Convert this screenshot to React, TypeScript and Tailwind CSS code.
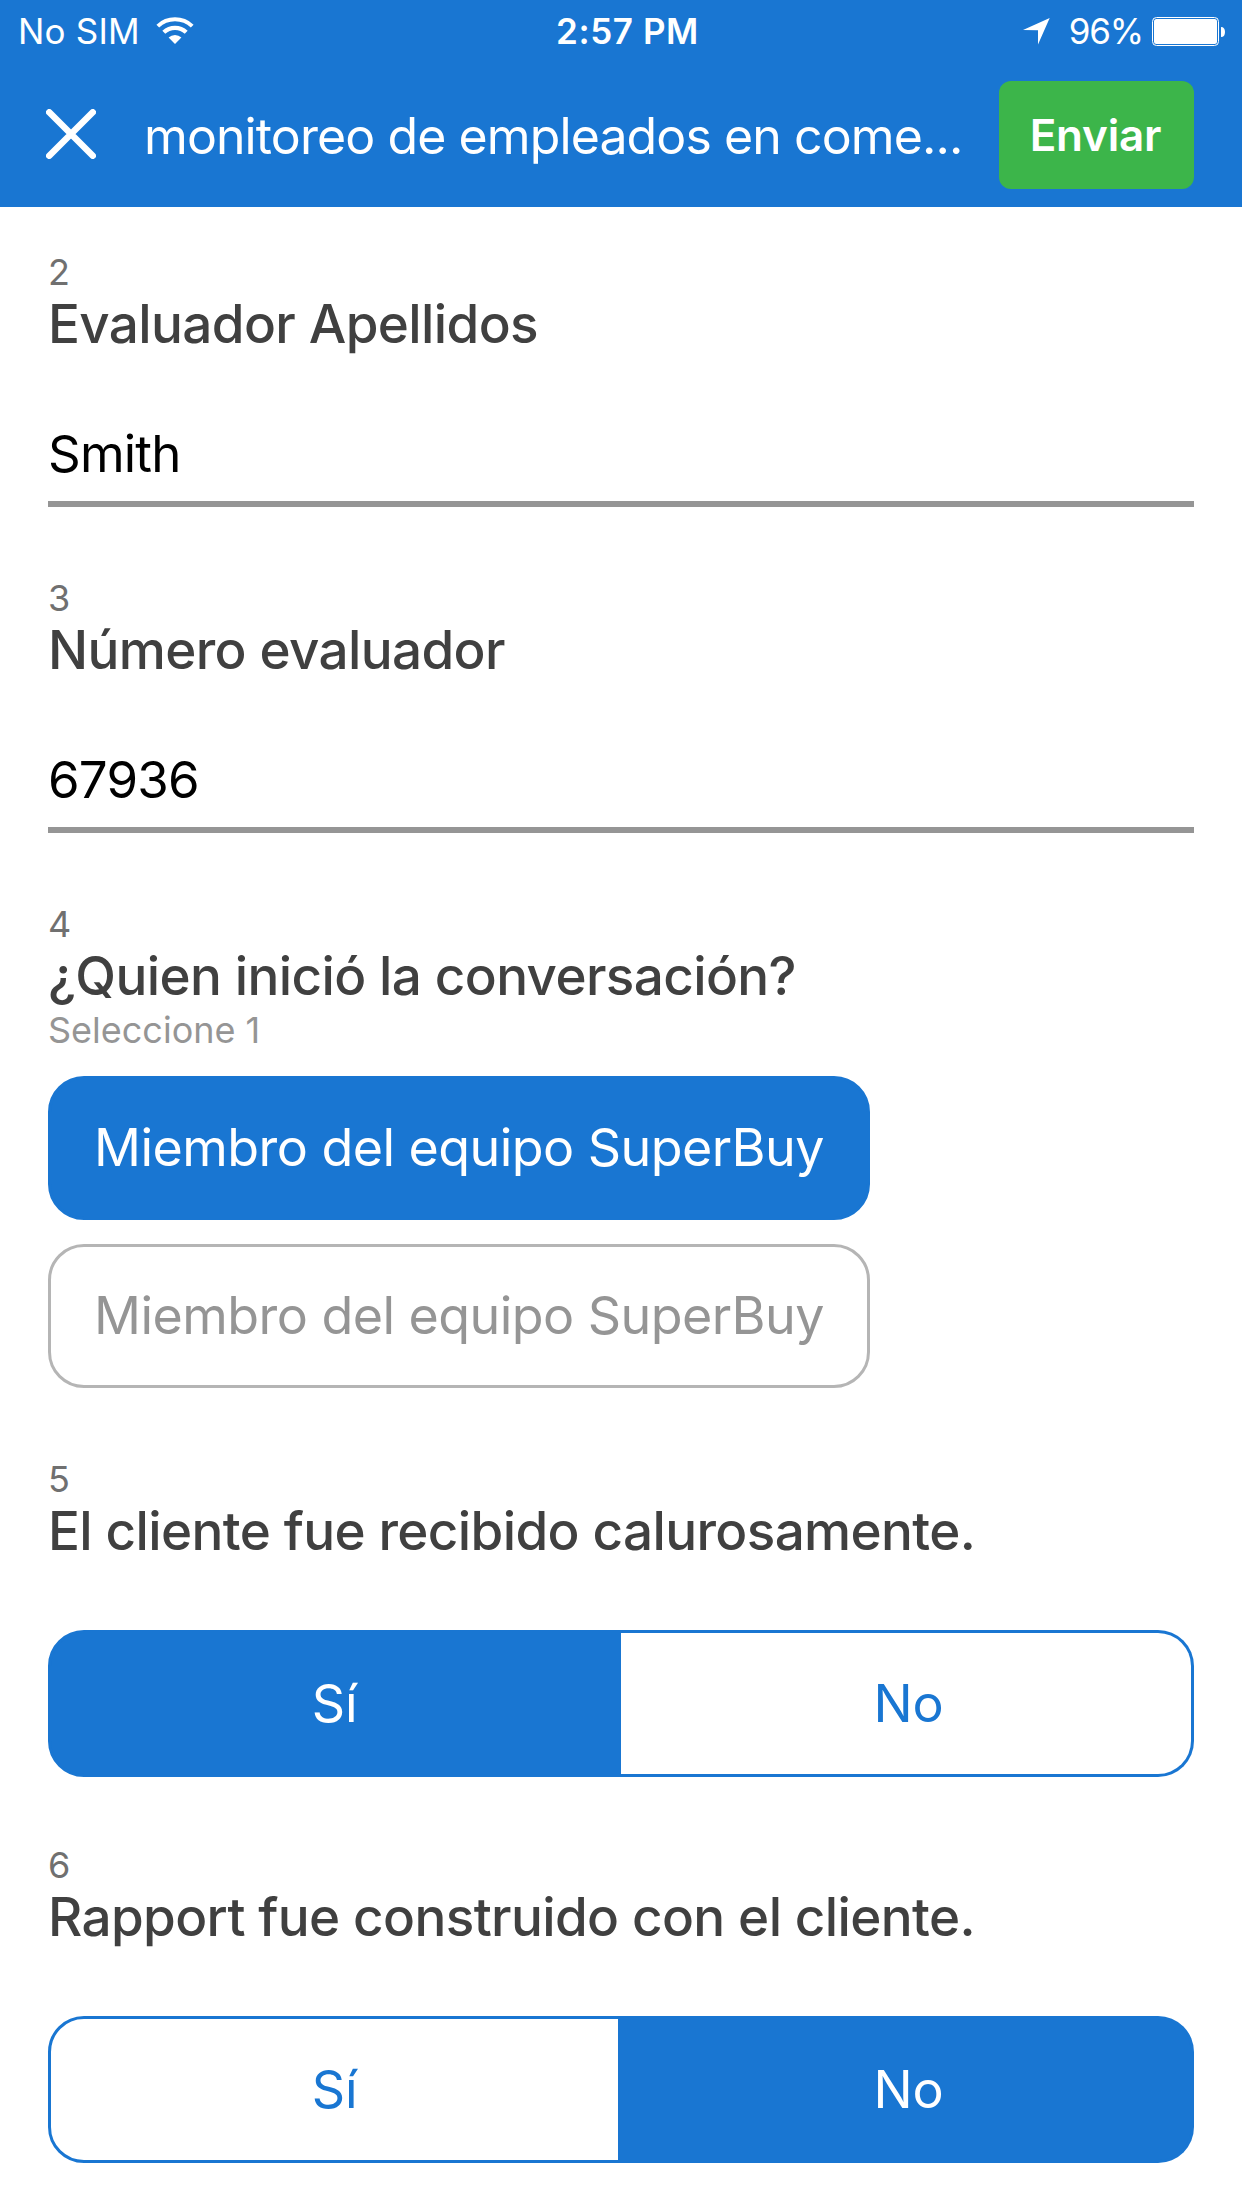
import { useState } from 'react'
import type { ReactNode } from 'react'

function WifiIcon() {
  return (
    <svg width="38" height="28" viewBox="0 0 38 28" fill="none" stroke="white" strokeWidth="4">
      <path d="M1.8 9.1A25.2 25.2 0 0 1 36.2 9.1" />
      <path d="M7.8 15.3A16.2 16.2 0 0 1 30.2 15.3" strokeWidth="4.2" />
      <path d="M19 27L12.6 20.6A9.2 9.2 0 0 1 25.4 20.6Z" fill="white" stroke="none" />
    </svg>
  )
}

function LocationIcon() {
  return (
    <svg width="27" height="27" viewBox="0 0 27 27" fill="white">
      <path d="M0 12L26.7 0L15 26.5V12.3Z" />
    </svg>
  )
}

function BatteryIcon() {
  return (
    <svg width="73" height="29" viewBox="0 0 73 29" fill="white">
      <rect x="0.5" y="0.5" width="66" height="28" rx="4" fill="none" stroke="white" />
      <rect x="2" y="2" width="63" height="25" rx="2.5" />
      <path d="M69 10C71.8 10 73 12 73 15C73 18 71.8 20 69 20Z" />
    </svg>
  )
}

function CloseIcon() {
  return (
    <svg width="50" height="50" viewBox="0 0 50 50" stroke="white" strokeWidth="6.5" strokeLinecap="round">
      <path d="M3.25 3.25L46.75 46.75M46.75 3.25L3.25 46.75" />
    </svg>
  )
}

function StatusBar() {
  return (
    <div className="grid h-[60px] grid-cols-3 items-center pt-0.5 pr-[17px] pl-[18px] text-[35px] leading-none text-white">
      <div className="flex items-center">
        <span className="w-[138px] tracking-[0.2px]">No SIM</span>
        <WifiIcon />
      </div>
      <span className="pl-3 text-center font-semibold tracking-[0.6px]">2:57 PM</span>
      <div className="flex items-center justify-end">
        <LocationIcon />
        <span className="mr-[9px] ml-[19px] tracking-[-1.2px]">96%</span>
        <BatteryIcon />
      </div>
    </div>
  )
}

function Question({
  number,
  title,
  hint,
  children,
}: {
  number: number
  title: string
  hint?: string
  children: ReactNode
}) {
  return (
    <section>
      <p className="text-[36px] leading-[42px] text-[#707070]">{number}</p>
      <h2 className="text-[53px] leading-[62px] font-medium tracking-[-0.62px] text-[#404040]">{title}</h2>
      {hint && <p className="mt-0.5 text-[36px] leading-[42px] text-[#959595]">{hint}</p>}
      {children}
    </section>
  )
}

function TextField({ value }: { value: string }) {
  return (
    <div className="mt-[68px] h-[84px] border-b-6 border-[#959595] text-[51px] leading-[62px] tracking-[-0.8px] text-black">
      {value}
    </div>
  )
}

function ChoiceList({ options }: { options: string[] }) {
  const [selected, setSelected] = useState(0)

  return (
    <div className="mt-[25px] flex w-[822px] flex-col gap-6">
      {options.map((option, i) => (
        <button
          key={i}
          type="button"
          onClick={() => setSelected(i)}
          className={`h-36 rounded-[36px] border-3 text-[52px] leading-none tracking-[-0.56px] whitespace-nowrap ${
            selected === i ? 'border-[#1976d2] bg-[#1976d2] text-white' : 'border-[#b5b5b5] bg-white text-[#959595]'
          }`}
        >
          {option}
        </button>
      ))}
    </div>
  )
}

function YesNo({ initial }: { initial: 'Sí' | 'No' }) {
  const [answer, setAnswer] = useState(initial)

  return (
    <div className="mt-[68px] grid h-[147px] grid-cols-2">
      {(['Sí', 'No'] as const).map((label) => (
        <button
          key={label}
          type="button"
          onClick={() => setAnswer(label)}
          className={`border-3 border-[#1976d2] text-[52px] leading-none tracking-[-0.3px] first:rounded-l-[36px] last:rounded-r-[36px] last:border-l-0 last:pl-[5px] ${
            answer === label ? 'bg-[#1976d2] text-white' : 'bg-white text-[#1976d2]'
          }`}
        >
          {label}
        </button>
      ))}
    </div>
  )
}

function App() {
  return (
    <div className="h-[2208px] w-[1242px] overflow-hidden bg-white font-['Inter',sans-serif]">
      <header className="h-[207px] bg-[#1976d2]">
        <StatusBar />
        <div className="flex items-center pt-[21px] pr-12 pl-[46px] text-white">
          <button type="button" aria-label="Cerrar" className="mb-0.5">
            <CloseIcon />
          </button>
          <h1 className="mt-0.5 ml-[48px] min-w-0 flex-1 text-[50px] leading-[60px] tracking-[-0.9px] whitespace-nowrap">
            monitoreo de empleados en come...
          </h1>
          <button
            type="button"
            className="h-[108px] w-[195px] shrink-0 rounded-xl bg-[#3cb54a] pr-0.5 text-[44px] leading-none font-semibold tracking-[-0.2px]"
          >
            Enviar
          </button>
        </div>
      </header>

      <main className="flex flex-col gap-[70px] px-12 pt-11">
        <Question number={2} title="Evaluador Apellidos">
          <TextField value="Smith" />
        </Question>
        <Question number={3} title="Número evaluador">
          <TextField value="67936" />
        </Question>
        <Question number={4} title="¿Quien inició la conversación?" hint="Seleccione 1">
          <ChoiceList options={['Miembro del equipo SuperBuy', 'Miembro del equipo SuperBuy']} />
        </Question>
        <div className="flex flex-col gap-[67px]">
          <Question number={5} title="El cliente fue recibido calurosamente.">
            <YesNo initial="Sí" />
          </Question>
          <Question number={6} title="Rapport fue construido con el cliente.">
            <YesNo initial="No" />
          </Question>
        </div>
      </main>
    </div>
  )
}

export default App
